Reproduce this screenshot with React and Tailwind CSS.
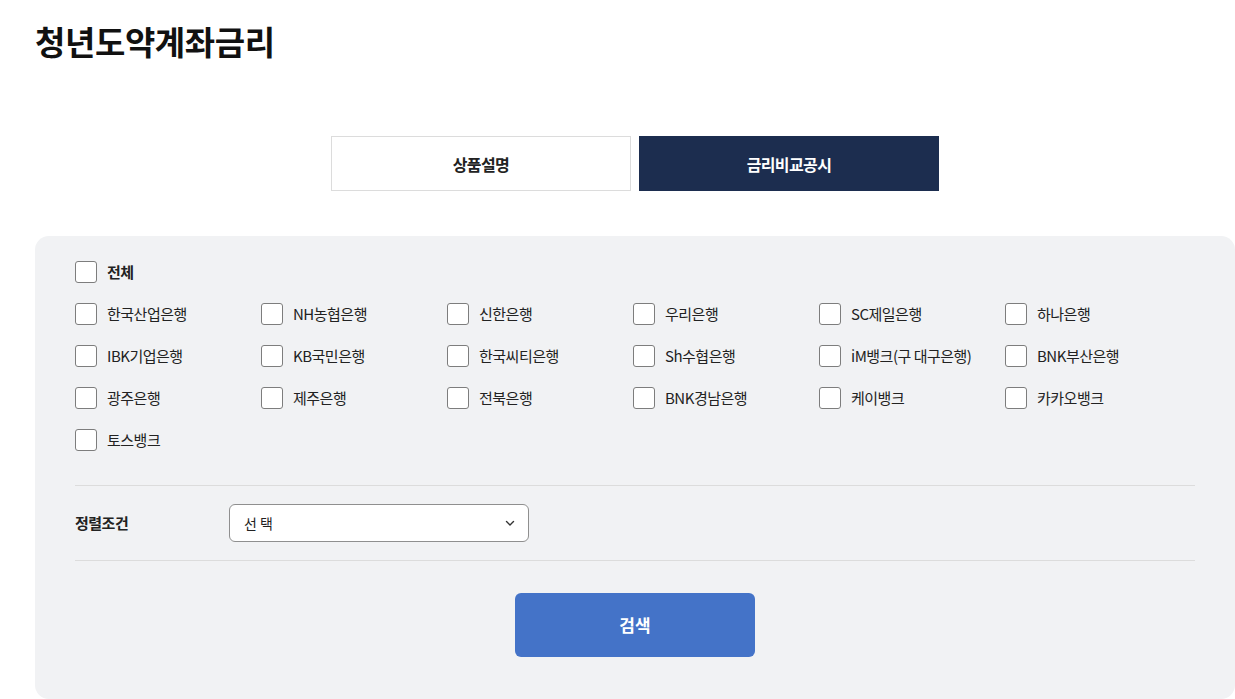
import React from 'react';

const banks = [
  '한국산업은행', 'NH농협은행', '신한은행', '우리은행', 'SC제일은행', '하나은행',
  'IBK기업은행', 'KB국민은행', '한국씨티은행', 'Sh수협은행', 'iM뱅크(구 대구은행)', 'BNK부산은행',
  '광주은행', '제주은행', '전북은행', 'BNK경남은행', '케이뱅크', '카카오뱅크',
  '토스뱅크',
];

const Check = ({ label, bold }) => (
  <label className="flex items-center gap-[10px] h-[22px] cursor-pointer">
    <span className="w-[22px] h-[22px] shrink-0 rounded-[3px] border border-[#7d7d7d] bg-white" />
    <span className={`text-[15px] tracking-[-0.5px] text-[#222] whitespace-nowrap ${bold ? 'font-bold' : ''}`}>
      {label}
    </span>
  </label>
);

export default function App() {
  return (
    <div
      className="w-[1235px] h-[699px] overflow-hidden bg-white pl-[35px]"
      style={{ fontFamily: '"Noto Sans CJK KR", "Noto Sans", sans-serif' }}
    >
      {/* Title */}
      <h1 className="pt-[18px] text-[33px] leading-[46px] font-bold tracking-[-0.4px] text-[#111]">
        청년도약계좌금리
      </h1>

      <div className="w-[1200px]">
        {/* Tabs */}
        <div className="mt-[72px] flex justify-center gap-[8px]">
          <button className="w-[300px] h-[55px] border border-[#dcdcdc] bg-white text-[16px] font-bold tracking-[-0.6px] text-[#222]">
            상품설명
          </button>
          <button className="w-[300px] h-[55px] bg-[#1c2d4f] text-[16px] font-bold tracking-[-0.6px] text-white">
            금리비교공시
          </button>
        </div>

        {/* Filter panel */}
        <div className="mt-[45px] rounded-[14px] bg-[#f1f2f4] px-[40px] pt-[25px] pb-[42px]">
          <Check label="전체" bold />

          <div className="mt-[20px] grid grid-cols-[repeat(6,186px)] gap-y-[20px]">
            {banks.map((b) => (
              <Check key={b} label={b} />
            ))}
          </div>

          <div className="mt-[34px] border-t border-[#dcdcdc]" />

          {/* Sort */}
          <div className="flex items-center py-[18px]">
            <span className="w-[154px] text-[15px] font-bold tracking-[-0.5px] text-[#222]">정렬조건</span>
            <div className="w-[300px] h-[38px] flex items-center justify-between rounded-[6px] border border-[#8f8f8f] bg-white pl-[14px] pr-[12px]">
              <span className="text-[14px] text-[#222]">선 택</span>
              <svg width="12" height="12" viewBox="0 0 12 12" fill="none">
                <path d="M2.5 4.5 6 8l3.5-3.5" stroke="#333" strokeWidth="1.4" strokeLinecap="round" strokeLinejoin="round" />
              </svg>
            </div>
          </div>

          <div className="border-t border-[#dcdcdc]" />

          <div className="mt-[32px] flex justify-center">
            <button className="w-[240px] h-[64px] rounded-[6px] bg-[#4473c8] text-[17px] font-bold text-white">
              검색
            </button>
          </div>
        </div>
      </div>
    </div>
  );
}
